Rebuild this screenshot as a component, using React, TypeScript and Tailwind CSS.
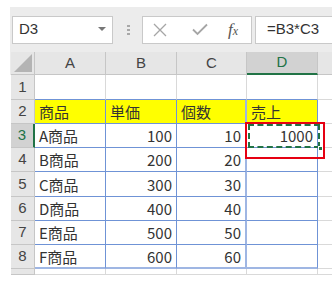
import React from 'react';

const cols = [71, 71, 70, 71];
const letters = ['A', 'B', 'C', 'D'];
const rowHeights = [25, 24, 24, 24, 25, 24, 24, 24, 6];

const data: (string | number)[][] = [
  ['', '', '', ''],
  ['商品', '単価', '個数', '売上'],
  ['A商品', 100, 10, 1000],
  ['B商品', 200, 20, ''],
  ['C商品', 300, 30, ''],
  ['D商品', 400, 40, ''],
  ['E商品', 500, 50, ''],
  ['F商品', 600, 60, ''],
  ['', '', '', ''],
];

const font = "font-['Noto_Sans_CJK_JP',sans-serif]";

function Toolbar() {
  return (
    <div className="flex items-center h-[45px] bg-[#ececec] pt-[0px] font-['Liberation_Sans',sans-serif]">
      <div className="ml-[1px] w-[101px] h-[28px] bg-white border border-[#c9c9c9] flex items-center justify-between pl-[6px] pr-[6px]">
        <span className="text-[15px] text-[#333]">D3</span>
        <svg width="8" height="5" viewBox="0 0 8 5">
          <path d="M0 0 L8 0 L4 4 Z" fill="#777" />
        </svg>
      </div>
      <div className="ml-[14px] w-[3px] flex flex-col gap-[2px]">
        <div className="w-[3px] h-[2px] bg-[#a8a8a8]" />
        <div className="w-[3px] h-[2px] bg-[#a8a8a8]" />
        <div className="w-[3px] h-[2px] bg-[#a8a8a8]" />
      </div>
      <div className="ml-[12px] w-[110px] h-[28px] bg-white border border-[#c9c9c9] flex items-center">
        <svg className="ml-[10px]" width="14" height="14" viewBox="0 0 14 14">
          <path d="M1 1 L13 13 M13 1 L1 13" stroke="#a6a6a6" strokeWidth="1.3" fill="none" />
        </svg>
        <svg className="ml-[25px]" width="16" height="13" viewBox="0 0 16 13">
          <path d="M1 6.5 L5.5 11 L15 1.5" stroke="#a6a6a6" strokeWidth="1.8" fill="none" />
        </svg>
        <span className="ml-[20px] text-[17px] italic text-[#555] font-['Liberation_Serif',serif] leading-none">
          f<span className="text-[12px]">x</span>
        </span>
      </div>
      <div className="ml-[3px] flex-1 h-[28px] bg-white border border-[#c9c9c9] border-r-0 flex items-center pl-[11px]">
        <span className="text-[15px] text-[#333]">=B3*C3</span>
      </div>
    </div>
  );
}

function ColumnHeader() {
  return (
    <div className="flex h-[23px] bg-[#e6e6e6] border-b border-[#c6c6c6] font-['Liberation_Sans',sans-serif] text-[15px] text-[#444]">
      <div className="w-[24px] h-full border-r border-[#c6c6c6] flex items-end justify-end p-[2px]">
        <svg width="18" height="18" viewBox="0 0 18 18">
          <path d="M18 0 L18 18 L0 18 Z" fill="#b4b4b4" />
        </svg>
      </div>
      {letters.map((l, i) => (
        <div
          key={l}
          style={{ width: cols[i] }}
          className={
            i === 3
              ? 'h-[23px] flex items-center justify-center border-r border-[#c6c6c6] bg-[#d2d2d2] text-[#217346] border-b-2 border-b-[#217346]'
              : 'h-full flex items-center justify-center border-r border-[#c6c6c6]'
          }
        >
          {l}
        </div>
      ))}
      <div className="flex-1 h-full" />
    </div>
  );
}

function Row({ r }: { r: number }) {
  const h = rowHeights[r];
  const inTable = r >= 1 && r <= 7;
  const selected = r === 2;
  return (
    <div className="flex" style={{ height: h }}>
      <div
        className={
          selected
            ? 'w-[24px] h-full bg-[#d2d2d2] border-r-2 border-[#217346] border-b border-b-[#c6c6c6] flex items-center justify-center text-[15px] text-[#217346] font-[\'Liberation_Sans\',sans-serif]'
            : 'w-[24px] h-full bg-[#e6e6e6] border-r border-[#c6c6c6] border-b border-b-[#c6c6c6] flex items-center justify-center text-[15px] text-[#444] font-[\'Liberation_Sans\',sans-serif]'
        }
      >
        {r < 8 ? r + 1 : ''}
      </div>
      {data[r].map((v, c) => {
        const isNum = typeof v === 'number';
        const yellow = r === 1;
        const bottomBlue = inTable || r === 0;
        return (
          <div
            key={c}
            style={{ width: cols[c] }}
            className={[
              'h-full flex items-center text-[15px] text-[#333] leading-none overflow-hidden',
              font,
              isNum ? 'justify-end pr-[4px]' : 'justify-start pl-[4px]',
              yellow ? 'bg-[#ffff00]' : 'bg-white',
              inTable
                ? c === 2
                  ? 'border-r-2 border-r-[#9fb6e3]'
                  : 'border-r border-r-[#6f93d6]'
                : 'border-r border-r-[#d9d9d9]',
              bottomBlue
                ? r === 7
                  ? 'border-b-2 border-b-[#9fb6e3]'
                  : 'border-b border-b-[#6f93d6]'
                : 'border-b border-b-[#d9d9d9]',
            ].join(' ')}
          >
            {v}
          </div>
        );
      })}
      <div className="flex-1 h-full bg-white border-b border-[#d9d9d9]" />
    </div>
  );
}

export default function App() {
  return (
    <div className="relative w-[332px] h-[287px] bg-white overflow-hidden">
      <div className="pt-[7px] pl-[10px]">
        <div className="pl-[1px] bg-[#ececec]">
          <Toolbar />
          <ColumnHeader />
        </div>
        <div className="pl-[1px]">
          {rowHeights.map((_, r) => (
            <Row key={r} r={r} />
          ))}
        </div>
      </div>
      <div className="absolute left-[248px] top-[124px] w-[72px] h-[24px] border-2 border-dashed border-[#217346]" />
      <div className="absolute left-[318px] top-[146px] w-[5px] h-[5px] bg-[#217346] border border-white" />
      <div className="absolute left-[245px] top-[122px] w-[80px] h-[37px] border-[2px] border-[#e60012]" />
    </div>
  );
}
